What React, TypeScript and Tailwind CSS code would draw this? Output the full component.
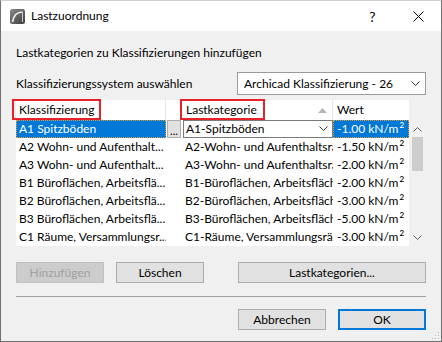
import React from "react";

const rows = [
  { cls: "A1 Spitzböden", cat: "A1-Spitzböden", val: "-1.00" },
  { cls: "A2 Wohn- und Aufenthalt...", cat: "A2-Wohn- und Aufenthaltsräume", val: "-1.50" },
  { cls: "A3 Wohn- und Aufenthalt...", cat: "A3-Wohn- und Aufenthaltsräume", val: "-2.00" },
  { cls: "B1 Büroflächen, Arbeitsflä...", cat: "B1-Büroflächen, Arbeitsflächen", val: "-2.00" },
  { cls: "B2 Büroflächen, Arbeitsflä...", cat: "B2-Büroflächen, Arbeitsflächen", val: "-3.00" },
  { cls: "B3 Büroflächen, Arbeitsflä...", cat: "B3-Büroflächen, Arbeitsflächen", val: "-5.00" },
  { cls: "C1 Räume, Versammlungsr...", cat: "C1-Räume, Versammlungsräume", val: "-3.00" },
];

function Chevron({ className = "" }: { className?: string }) {
  return (
    <svg width="9" height="6" viewBox="0 0 9 6" className={className}>
      <path d="M0.5 0.5 L4.5 4.5 L8.5 0.5" fill="none" stroke="currentColor" strokeWidth="1" />
    </svg>
  );
}

function Value({ v }: { v: string }) {
  return (
    <span className="whitespace-nowrap">
      {v} kN/m<span className="text-[8px] font-semibold relative top-[-5px] ml-[1px]">2</span>
    </span>
  );
}

function Btn({ children, disabled, primary, className = "" }: { children: React.ReactNode; disabled?: boolean; primary?: boolean; className?: string }) {
  const base = "h-[21px] flex items-center justify-center text-[12px] shrink-0";
  if (disabled) return <div className={`${base} bg-[#cccccc] border border-[#bfbfbf] text-[#a0a0a0] ${className}`}>{children}</div>;
  if (primary) return <div className={`${base} bg-[#e1e1e1] border-2 border-[#0078d7] text-black ${className}`}>{children}</div>;
  return <div className={`${base} bg-[#e1e1e1] border border-[#adadad] text-black ${className}`}>{children}</div>;
}

export default function App() {
  return (
    <div
      className="relative w-[442px] h-[342px] bg-[#f0f0f0] border border-[#707070] border-t-[#d0d0d0] flex flex-col text-[12px] text-black overflow-hidden"
      style={{ fontFamily: "Lato, 'Noto Sans', sans-serif" }}
    >
      {/* title bar */}
      <div className="h-[30px] bg-white flex items-center shrink-0">
        <svg width="15" height="15" viewBox="0 0 15 15" className="ml-[9px] mt-[1px]">
          <defs>
            <linearGradient id="lg" x1="0" y1="0" x2="1" y2="1">
              <stop offset="0" stopColor="#8a8a8a" />
              <stop offset="1" stopColor="#3e3e3e" />
            </linearGradient>
          </defs>
          <rect x="0" y="0" width="15" height="15" rx="2.5" fill="url(#lg)" />
          <path d="M2.5 13 C3.5 7 7 3 12.5 3" fill="none" stroke="#f4f4f4" strokeWidth="1.6" />
          <path d="M12.5 3 L12.5 13" fill="none" stroke="#cfcfcf" strokeWidth="1" />
        </svg>
        <span className="ml-[6px] text-[12px]">Lastzuordnung</span>
        <div className="flex-1" />
        <div className="w-[45px] h-full flex items-center justify-center text-[14px]">?</div>
        <div className="w-[46px] h-full flex items-center justify-center">
          <svg width="11" height="11" viewBox="0 0 11 11">
            <path d="M0.5 0.5 L10.5 10.5 M10.5 0.5 L0.5 10.5" stroke="#000" strokeWidth="1" />
          </svg>
        </div>
      </div>

      {/* body */}
      <div className="flex flex-col pl-[15px] pr-[15px] pt-[14px]">
        <div className="h-[16px] leading-[16px]">Lastkategorien zu Klassifizierungen hinzufügen</div>

        <div className="mt-[11px] flex items-center h-[23px]">
          <span className="flex-1">Klassifizierungssystem auswählen</span>
          <div className="w-[189px] h-[23px] bg-white border border-[#9a9a9a] flex items-center pl-[6px] pr-[5px]">
            <span className="flex-1">Archicad Klassifizierung - 26</span>
            <Chevron className="text-[#333]" />
          </div>
        </div>

        {/* table */}
        <div className="mt-[5px] flex">
          <div className="w-[393px] flex flex-col shrink-0">
            <div className="relative h-[20px] bg-white flex items-center">
              <div className="w-[150px] shrink-0 pl-[3px] h-full flex items-center border-r border-[#e5e5e5]">Klassifizierung</div>
              <div className="w-[17px] shrink-0 h-full" />
              <div className="w-[150px] shrink-0 pl-[3px] pr-[5px] h-full flex items-center border-r border-[#e5e5e5]">
                <span className="flex-1">Lastkategorie</span>
                <svg width="9" height="5" viewBox="0 0 9 5">
                  <path d="M0 5 L4.5 0 L9 5 Z" fill="#b5b5b5" />
                </svg>
              </div>
              <div className="w-[76px] shrink-0 pl-[4px] h-full flex items-center">Wert</div>
              <div className="absolute left-[-4px] top-[-1px] w-[89px] h-[21px] border-2 border-[#e8222b]" />
              <div className="absolute left-[164px] top-[-1px] w-[85px] h-[21px] border-2 border-[#e8222b]" />
            </div>
            {rows.map((r, i) =>
              i === 0 ? (
                <div key={r.cls} className="h-[18px] bg-white flex items-center">
                  <div className="w-[150px] shrink-0 h-full bg-[#0078d7] text-white pl-[3px] flex items-center outline-1 outline-dotted outline-offset-[-1px] outline-[#e39b3c]">
                    {r.cls}
                  </div>
                  <div className="w-[17px] shrink-0 h-full flex items-center">
                    <div className="ml-[1px] w-[14px] h-[18px] bg-[#e1e1e1] border border-[#adadad] flex items-end justify-center leading-[12px] text-[11px]">...</div>
                  </div>
                  <div className="w-[150px] shrink-0 h-full bg-white border border-[#7a7a7a] flex items-center pl-[2px] pr-[4px]">
                    <span className="flex-1">{r.cat}</span>
                    <Chevron className="text-[#333]" />
                  </div>
                  <div className="w-[76px] shrink-0 h-full bg-[#0078d7] text-white pl-[4px] flex items-center outline-1 outline-dotted outline-offset-[-1px] outline-[#e39b3c]">
                    <Value v={r.val} />
                  </div>
                </div>
              ) : (
                <div key={r.cls} className="h-[18px] bg-white flex items-center">
                  <div className="w-[150px] shrink-0 pl-[3px] whitespace-nowrap overflow-hidden">{r.cls}</div>
                  <div className="w-[17px] shrink-0" />
                  <div className="w-[150px] shrink-0 pl-[2px] whitespace-nowrap overflow-hidden">{r.cat}</div>
                  <div className="w-[76px] shrink-0 pl-[4px]">
                    <Value v={r.val} />
                  </div>
                </div>
              )
            )}
          </div>
          {/* scrollbar */}
          <div className="w-[17px] pt-[20px] flex flex-col items-center">
            <div className="h-[17px] flex items-center justify-center">
              <Chevron className="text-[#606060] rotate-180" />
            </div>
            <div className="w-[11px] h-[34px] bg-[#cdcdcd]" />
            <div className="flex-1" />
            <div className="h-[17px] flex items-center justify-center">
              <Chevron className="text-[#606060]" />
            </div>
          </div>
        </div>

        <div className="mt-[16px] flex">
          <Btn disabled className="w-[88px]">Hinzufügen</Btn>
          <Btn className="w-[88px] ml-[12px]">Löschen</Btn>
          <div className="flex-1" />
          <Btn className="w-[188px]">Lastkategorien...</Btn>
        </div>

        <div className="mt-[13px] h-px bg-[#a0a0a0]" />

        <div className="mt-[12px] flex justify-end gap-[12px]">
          <Btn className="w-[88px]">Abbrechen</Btn>
          <Btn primary className="w-[88px]">OK</Btn>
        </div>
      </div>

      {/* size grip */}
      <svg width="8" height="8" viewBox="0 0 8 8" className="absolute right-[1px] bottom-[1px]">
        <g fill="#b5b5b5">
          <rect x="6" y="0" width="1" height="1" />
          <rect x="3" y="3" width="1" height="1" />
          <rect x="6" y="3" width="1" height="1" />
          <rect x="0" y="6" width="1" height="1" />
          <rect x="3" y="6" width="1" height="1" />
          <rect x="6" y="6" width="1" height="1" />
        </g>
      </svg>
    </div>
  );
}
